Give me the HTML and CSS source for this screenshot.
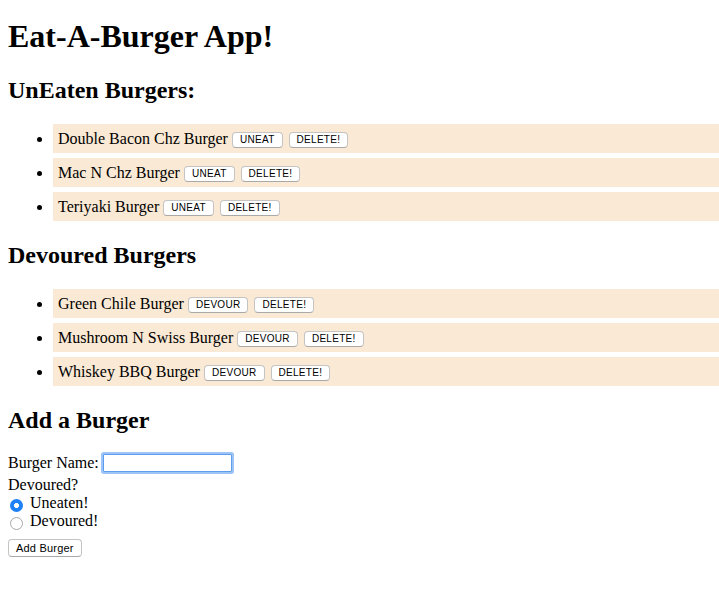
FILE: index.html
```html
<!DOCTYPE html>
<html>
<head>
<meta charset="utf-8">
<link rel="stylesheet" href="styles.css">
</head>
<body>
<h1>Eat-A-Burger App!</h1>
<h2>UnEaten Burgers:</h2>
<ul class="list">
  <li class="item">Double Bacon Chz Burger <button class="btn">UNEAT</button> <button class="btn">DELETE!</button></li>
  <li class="item">Mac N Chz Burger <button class="btn">UNEAT</button> <button class="btn">DELETE!</button></li>
  <li class="item">Teriyaki Burger <button class="btn">UNEAT</button> <button class="btn">DELETE!</button></li>
</ul>
<h2>Devoured Burgers</h2>
<ul class="list">
  <li class="item">Green Chile Burger <button class="btn">DEVOUR</button> <button class="btn">DELETE!</button></li>
  <li class="item">Mushroom N Swiss Burger <button class="btn">DEVOUR</button> <button class="btn">DELETE!</button></li>
  <li class="item">Whiskey BBQ Burger <button class="btn">DEVOUR</button> <button class="btn">DELETE!</button></li>
</ul>
<h2>Add a Burger</h2>
<form class="form">
  <div class="name-row"><span class="label">Burger Name:</span><input class="name-input" type="text" autofocus></div>
  <div class="row">Devoured?</div>
  <div class="radio-row"><input class="radio" type="radio" name="dev" checked><span>Uneaten!</span></div>
  <div class="radio-row"><input class="radio" type="radio" name="dev"><span>Devoured!</span></div>
  <button class="btn add-btn" type="button">Add Burger</button>
</form>
</body>
</html>
```
FILE: styles.css
```css
body {
  margin: 8px 0 8px 8px;
  font-family: "Liberation Serif", "Times New Roman", serif;
  font-size: 16px;
  color: #000;
  background: #fff;
}
h1 {
  font-size: 32px;
  margin: 10px 0 21px;
}
h2 {
  font-size: 24px;
  line-height: 28px;
  margin: 20px 0;
}
.list {
  margin: 16px 0;
  padding-left: 40px;
}
.item {
  background: #fae9d5;
  padding: 5px;
  margin: 5px 0 5px 5px;
  line-height: 19px;
}
.btn {
  font-family: "Liberation Sans", Arial, sans-serif;
  font-size: 10px;
  letter-spacing: 0.3px;
  background: #fff;
  border: 1px solid #c4c4c4;
  border-bottom-color: #a9a9a9;
  border-radius: 4px;
  padding: 0 7px;
  height: 16px;
  line-height: 14px;
  vertical-align: 1px;
  color: #000;
  margin: 0 2px 0 0;
}
.form {
  margin: 0;
}
.name-row {
  display: flex;
  align-items: flex-start;
  height: 22px;
  line-height: 18px;
}
.label {
  margin-right: 4px;
}
.name-input {
  box-sizing: border-box;
  width: 129px;
  height: 18px;
  border: 1px solid #5d9df0;
  box-shadow: 0 0 0 2px #9cc4f6;
  border-radius: 1px;
  outline: none;
  padding: 0 3px;
  margin: 0;
  font-size: 13px;
}
.row {
  line-height: 18px;
}
.radio-row {
  display: flex;
  align-items: flex-start;
  height: 18px;
  line-height: 18px;
}
.radio {
  appearance: none;
  -webkit-appearance: none;
  box-sizing: border-box;
  width: 13px;
  height: 13px;
  margin: 5px 7px 0 2px;
  border: 1px solid #a8a8a8;
  border-radius: 50%;
  background: #fff;
  flex: none;
}
.radio:checked {
  border: none;
  background: radial-gradient(circle, #fff 0, #fff 2.2px, #1e81f6 2.8px);
}
.add-btn {
  margin-top: 9px;
  height: 18px;
  padding: 0 7px;
  font-size: 11px;
  letter-spacing: 0.2px;
  line-height: 16px;
}
```
